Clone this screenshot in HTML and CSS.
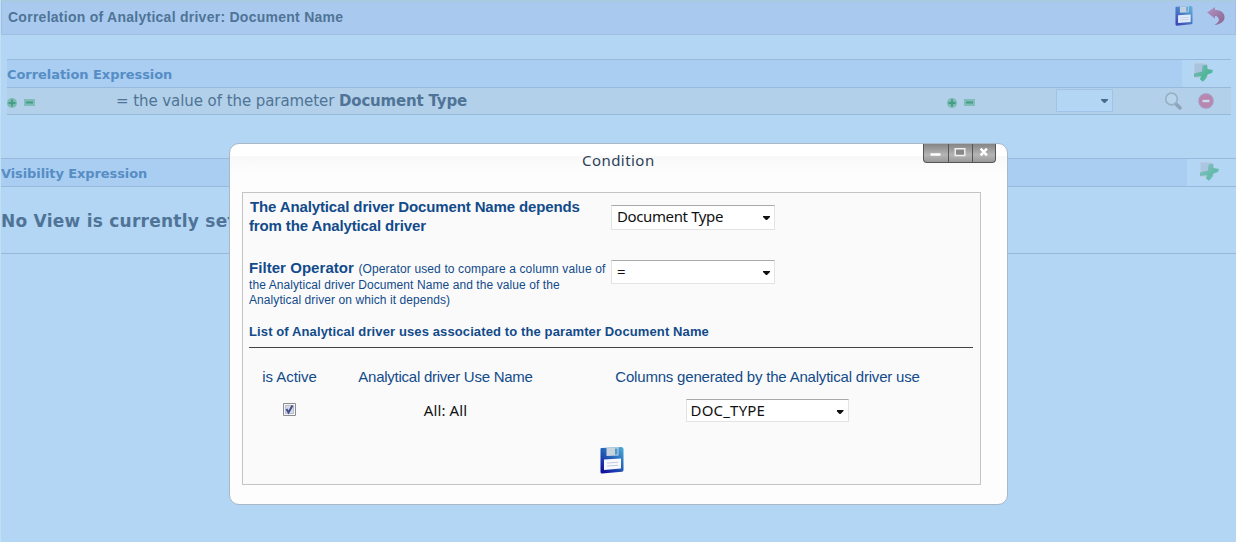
FILE: index.html
```
<!DOCTYPE html>
<html lang="en">
<head>
<meta charset="utf-8">
<title>Correlation of Analytical driver</title>
<link rel="stylesheet" href="styles.css">
</head>
<body>
<svg class="defs" width="0" height="0" aria-hidden="true">
  <defs>
    <linearGradient id="diskBlue" x1="1" y1="0" x2="0.2" y2="1"><stop offset="0" stop-color="#4eaedb"/><stop offset=".5" stop-color="#2462b8"/><stop offset="1" stop-color="#1210a0"/></linearGradient>
    <linearGradient id="undoRed" x1="0" y1="0" x2="1" y2="1"><stop offset="0" stop-color="#b495c6"/><stop offset="1" stop-color="#88648f"/></linearGradient>
    <linearGradient id="arrowGreen" x1="0" y1="0" x2="1" y2="1"><stop offset="0" stop-color="#86b9c4"/><stop offset=".6" stop-color="#50b598"/><stop offset="1" stop-color="#69c0ba"/></linearGradient>
    <symbol id="disk" viewBox="0 0 24 27">
      <path d="M.5 2 Q.5 1 1.500 1 L22 0 L23.500 1.500 V23 Q23.500 24.500 22 24.700 L2 26.500 Q.5 26.500 .5 25 Z" fill="url(#diskBlue)"/>
      <path d="M6.500 .8 L18.500 .3 V8.500 L6.500 9 Z" fill="#c8d3de"/><path d="M15 1.500 L17.500 1.400 V7.500 L15 7.700 Z" fill="#4c9bc9"/>
      <path d="M4 12.500 L21 11.500 V21.500 L4 23 Z" fill="#f8f9ff"/>
      <path d="M7 16 L18 15.300 M7 19 L18 18.300" stroke="#c9ccd8" stroke-width="1"/>
    </symbol>
    <symbol id="add" viewBox="0 0 20 20">
      <path d="M1 1 H11.500 L15 4.500 V16 H1Z" fill="#a9c3dd" stroke="#bfd2e6"/>
      <path d="M9.500 3.500 L14 2.500 L14.500 7 L20 8 L19 11 L14.500 12.500 L13 16.500 L10 19.800 L7 17.500 L8 14 L1 15 L1 11.500 L9 9.500 Z" fill="url(#arrowGreen)"/>
    </symbol>
    <symbol id="plus" viewBox="0 0 10 10"><circle cx="5" cy="5" r="5" fill="#7dbbb2"/><path d="M5 1.500V8.500M1.500 5H8.500" stroke="#459d88" stroke-width="1.800"/></symbol>
    <symbol id="minus" viewBox="0 0 11 7"><path d="M0 0H11V7H0Z" fill="#80bdb8"/><path d="M2 3.500H9" stroke="#459d88" stroke-width="2"/></symbol>
  </defs>
</svg>
<div class="page">
  <header class="titlebar">
    <h1 class="titlebar-text">Correlation of Analytical driver: Document Name</h1>
    <div class="titlebar-tools">
      <svg class="tool-disk"><use href="#disk"/></svg>
      <svg class="tool-undo" viewBox="0 0 18 18"><path d="M0 5.500 L8 0 V3 C14.500 2.500 18 6.500 17.500 11 C17 15 13 17.500 7.500 18 C11.500 15.500 12.500 13.500 11.500 11.300 C10.800 9.500 9.500 9 8 9 V11.500 Z" fill="url(#undoRed)"/></svg>
    </div>
  </header>

  <section class="correlation">
    <div class="section-head">
      <h2 class="section-title correlation-title">Correlation Expression</h2>
      <div class="section-add correlation-add"><svg class="icon-add"><use href="#add"/></svg></div>
    </div>
    <div class="expression">
      <div class="toggles"><svg class="icon-plus"><use href="#plus"/></svg><svg class="icon-minus"><use href="#minus"/></svg></div>
      <p class="expression-text">= the value of the parameter <b class="expression-param">Document Type</b></p>
      <div class="toggles toggles-right"><svg class="icon-plus"><use href="#plus"/></svg><svg class="icon-minus"><use href="#minus"/></svg></div>
      <div class="select select-small"><span class="caret"></span></div>
      <svg class="icon-lens" viewBox="0 0 18 18"><path d="M11.500 11.500 L16 16" stroke="#8fa3b8" stroke-width="3.500" stroke-linecap="round"/><circle cx="7.500" cy="7" r="5.800" fill="#b7d4ed" stroke="#96b0c6" stroke-width="1.700"/></svg>
      <svg class="icon-remove" viewBox="0 0 16 16"><circle cx="8" cy="8" r="7" fill="#b887ae" stroke="#ae92bb" stroke-width="1.500"/><path d="M4.500 8H11.500" stroke="#c6dbf1" stroke-width="2.400"/></svg>
    </div>
  </section>

  <section class="visibility">
    <div class="section-head">
      <h2 class="section-title visibility-title">Visibility Expression</h2>
      <div class="section-add visibility-add"><svg class="icon-add"><use href="#add"/></svg></div>
    </div>
    <p class="no-view">No View is currently set</p>
  </section>

  <div class="dialog">
    <div class="dialog-head">
      <span class="dialog-title">Condition</span>
      <div class="window-tools">
        <svg class="window-tool" viewBox="0 0 24 19"><path d="M6.500 10.500H16.500" stroke="#fff" stroke-width="2.500"/></svg>
        <svg class="window-tool" viewBox="0 0 24 19"><path d="M6.500 4.500H16.500V11.500H6.500Z" fill="#888" stroke="#f2f2f2" stroke-width="1.500"/></svg>
        <svg class="window-tool" viewBox="0 0 24 19"><path d="M8 4.500L14.500 11.500M14.500 4.500L8 11.500" stroke="#fff" stroke-width="2.600"/></svg>
      </div>
    </div>
    <div class="panel">
      <div class="field depends">
        <div class="field-label"><span class="line depends-a">The Analytical driver Document Name depends</span><span class="line depends-b">from the Analytical driver</span></div>
        <div class="select"><span class="select-text doc-type">Document Type</span><span class="caret"></span></div>
      </div>
      <div class="field operator">
        <div class="field-label"><span class="line"><b class="operator-name">Filter Operator</b> <span class="hint hint-a">(Operator used to compare a column value of</span></span><span class="line hint hint-b">the Analytical driver Document Name and the value of the</span><span class="line hint hint-c">Analytical driver on which it depends)</span></div>
        <div class="select"><span class="select-text">=</span><span class="caret"></span></div>
      </div>
      <h3 class="list-title">List of Analytical driver uses associated to the paramter Document Name</h3>
      <div class="uses">
        <span class="uses-head head-active">is Active</span>
        <span class="uses-head head-name">Analytical driver Use Name</span>
        <span class="uses-head head-columns">Columns generated by the Analytical driver use</span>
        <svg class="checkbox" viewBox="0 0 13 13"><path d="M.5 .5H12.500V12.500H.5Z" fill="#f4f5f8" stroke="#8b8d93"/><path d="M2.500 2.500H10.500V10.500H2.500Z" fill="#d5dae3" stroke="#b9bfc9"/><path d="M3.500 6L5.500 9.500L9.500 2.500" fill="none" stroke="#40508f" stroke-width="2"/></svg>
        <span class="use-name">All: All</span>
        <div class="select select-column"><span class="select-text column-text">DOC_TYPE</span><span class="caret"></span></div>
      </div>
      <svg class="save"><use href="#disk"/></svg>
    </div>
  </div>
</div>
</body>
</html>
```
FILE: styles.css
```
* { box-sizing: border-box; }
body { margin: 0; background: #b4d6f5; font-family: "DejaVu Sans", sans-serif; color: #4f7497; }
h1, h2, h3, p { margin: 0; white-space: nowrap; }
svg { display: block; flex: none; }
.defs { position: absolute; }
.page { position: relative; width: 1236px; height: 542px; overflow: hidden; border-left: 1px solid #c3dff3; }

.titlebar { display: flex; justify-content: space-between; height: 35px; border: 1px solid #9fc0e2; border-top: 2px solid #aacbdf; background: #a9caee; padding: 0 10px 0 6px; }
.titlebar-text { font: bold 14px/31px "Liberation Sans", sans-serif; letter-spacing: .26px; }
.titlebar-tools { display: flex; gap: 14px; padding-top: 4px; }
.tool-disk { width: 18px; height: 20px; opacity: .7; }
.tool-undo { width: 18px; height: 18px; margin-top: 1px; }

.correlation { margin: 24px 5px 0 6px; border-top: 1px solid #98b9dc; }
.section-head { display: flex; height: 28px; border-bottom: 1px solid #98b9dc; background: #a9cef1; }
.section-title { flex: 1; font-size: 13px; line-height: 28px; color: #568dc5; }
.correlation-title { line-height: 30px; letter-spacing: -.06px; }
.section-add { background: #b4d6f5; }
.correlation-add { width: 49px; padding: 2px 0 0 11px; }
.icon-add { width: 20px; height: 20px; }
.expression { display: flex; height: 27px; background: #b2d0e9; border-bottom: 1px solid #98b9dc; }
.toggles { display: flex; gap: 7px; width: 109px; padding-top: 10px; }
.icon-plus { width: 10px; height: 10px; }
.icon-minus { width: 11px; height: 7px; margin-top: 1px; }
.expression-text { width: 831px; font-size: 15px; line-height: 26px; letter-spacing: -.07px; }
.expression-param { letter-spacing: -.18px; }
.toggles-right { width: 109px; }
.select { display: flex; justify-content: space-between; width: 164px; height: 25px; padding: 0 4px 0 5px; border: 1px solid #e3e3e3; border-top-color: #a9a9a9; background: #fff; color: #111; }
.select-text { font: 15px/21px "Noto Sans", sans-serif; white-space: nowrap; }
.doc-type { letter-spacing: -.38px; }
.caret { width: 7px; height: 4px; margin: 10px 0 0 auto; background: currentColor; clip-path: polygon(0 0, 100% 0, 100% 25%, 57% 100%, 43% 100%, 0 25%); }
.select-small { width: 57px; height: 23px; margin-top: 1px; border-color: #9fc4e8; background: #b4d6f5; color: #496b8d; }
.select-small .caret { margin-top: 9px; }
.icon-lens { width: 18px; height: 18px; margin: 4px 0 0 51px; }
.icon-remove { width: 16px; height: 16px; margin: 5px 0 0 16px; }

.visibility { height: 96px; margin-top: 43px; border-top: 1px solid #98b9dc; border-bottom: 1px solid #98b9dc; }
.visibility-title { line-height: 29px; letter-spacing: -.1px; }
.visibility-add { width: 49px; padding: 2px 0 0 12px; }
.visibility-add .icon-add { opacity: .8; }
.no-view { font-size: 17px; font-weight: bold; line-height: 68px; letter-spacing: .25px; }

.dialog { position: absolute; left: 228px; top: 143px; width: 779px; height: 362px; border: 1px solid #a8b8c8; border-radius: 10px; background: linear-gradient(#fff 12px, #f8f8f8 12px, #fdfdfd 28px); }
.dialog-head { display: flex; justify-content: flex-end; height: 48px; padding-right: 11px; }
.dialog-title { width: 341px; font: 15px/32px "Noto Sans", sans-serif; letter-spacing: .45px; color: #2c4259; }
.window-tools { display: flex; width: 73px; height: 19px; border: 1px solid #555; border-top: 0; border-radius: 0 0 4px 4px; overflow: hidden; background: linear-gradient(#858585, #b5b5b5 60%, #999); }
.window-tool { width: 24px; height: 19px; }
.window-tool + .window-tool { border-left: 1px solid #555; }
.panel { width: 739px; height: 293px; margin-left: 12px; padding: 4px 7px 0 6px; border: 1px solid #c4c4c4; background: #fafafa; color: #124b8a; font-family: "Liberation Sans", sans-serif; }
.field { display: flex; }
.field-label { width: 362px; }
.line { display: block; white-space: nowrap; }
.depends { height: 63px; }
.depends .select { margin-top: 8px; }
.depends .line { font-size: 15px; font-weight: bold; line-height: 19px; letter-spacing: -.13px; }
.depends .depends-a { padding-left: 1px; }
.operator .select { height: 24px; }
.operator { height: 64px; }
.operator .line { line-height: 16px; }
.operator .hint-c { line-height: 14px; }
.operator-name { font-size: 15px; letter-spacing: .05px; }
.hint { font-size: 12px; }
.hint-a { letter-spacing: .13px; }
.hint-b, .hint-c { letter-spacing: .08px; }
.list-title { height: 24px; border-bottom: 1px solid #444; font-size: 13px; line-height: 15px; letter-spacing: .115px; }
.uses { display: grid; grid-template-columns: 81px 231px 412px; grid-template-rows: 51px 48px; justify-items: center; }
.uses-head { padding-top: 20px; font-size: 15px; line-height: 18px; white-space: nowrap; }
.head-active { letter-spacing: -.05px; }
.head-name { letter-spacing: -.25px; }
.head-columns { padding-left: 1px; letter-spacing: -.2px; }
.checkbox { width: 13px; height: 13px; margin-top: 4px; }
.use-name { font: 15px/23px "Noto Sans", sans-serif; letter-spacing: .1px; color: #111; }
.select-column { width: 163px; height: 23px; padding-left: 4px; }
.column-text { letter-spacing: .2px; }
.save { width: 24px; height: 27px; margin-left: 351px; }
```
